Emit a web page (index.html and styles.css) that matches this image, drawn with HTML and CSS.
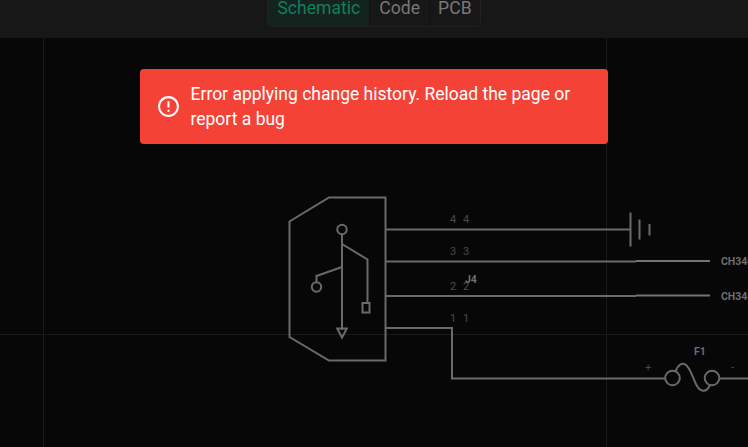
FILE: index.html
```html
<!DOCTYPE html>
<html lang="en">
<head>
<meta charset="utf-8">
<title>Schematic</title>
<link rel="stylesheet" href="styles.css">
</head>
<body>
<div class="app">
  <header class="topbar">
    <div class="tabs">
      <div class="tab tab-active">Schematic</div>
      <div class="tab">Code</div>
      <div class="tab tab-pcb">PCB</div>
    </div>
  </header>
  <main class="canvas">
    <svg class="schematic" width="748" height="409" viewBox="0 38 748 409" xmlns="http://www.w3.org/2000/svg">
      <g class="grid">
        <path d="M43.5 38V447M606.5 38V447M0 334.5H748"/>
      </g>
      <g class="wire">
        <path d="M329 197.500H385.500V360.500H329L289.500 337V221.500Z"/>
        <path d="M385.500 229.500H630M385.500 261.500H636M385.500 296H636M385.500 328H452V378.500H666"/>
        <path class="wire-bright" d="M636 261H710M636 295.500H710"/>
        <circle cx="342" cy="229.500" r="4.700"/>
        <path d="M342 234V330M342 244L367.500 259.500V302"/>
        <rect x="362.500" y="303" width="7" height="9.500"/>
        <path d="M337.200 328.500H346.800L342 337.500Z"/>
        <path d="M342 267L316.500 276V282"/>
        <circle cx="316.500" cy="287" r="4.700"/>
        <path class="bar" d="M630.500 212.500V246.500M639.500 219.500V239.500M649.500 224V235.500"/>
        <circle cx="672.500" cy="378" r="7.300"/>
        <circle cx="712" cy="378" r="7.300"/>
        <path d="M719.500 378.500H748"/>
        <path d="M675.500 371C678 365 682 362 686 365C691 369 693 379 697 386C700 391 706 394 710 385"/>
      </g>
      <g class="pins">
        <text x="450" y="223">4</text><text x="463" y="223">4</text>
        <text x="450" y="255">3</text><text x="463" y="255">3</text>
        <text x="450" y="290">2</text><text x="463" y="290">2</text>
        <text x="450" y="322">1</text><text x="463" y="322">1</text>
        <text x="645" y="371">+</text><text x="731" y="371">-</text>
      </g>
      <g class="labels">
        <text x="465" y="283">J4</text>
        <text x="721" y="265">CH340</text>
        <text x="721" y="300">CH340</text>
        <text x="694" y="355">F1</text>
      </g>
    </svg>
    <div class="alert" role="alert">
      <svg class="alert-icon" viewBox="0 0 24 24" width="25" height="25" xmlns="http://www.w3.org/2000/svg">
        <path d="M11 15h2v2h-2zm0-8h2v6h-2zm.99-5C6.470 2 2 6.480 2 12s4.470 10 9.990 10C17.520 22 22 17.520 22 12S17.520 2 11.990 2zM12 20c-4.420 0-8-3.580-8-8s3.580-8 8-8 8 3.580 8 8-3.580 8-8 8z"/>
      </svg>
      <div class="alert-message">Error applying change history. Reload the page or report a bug</div>
    </div>
  </main>
</div>
</body>
</html>
```
FILE: styles.css
```css
* {
  box-sizing: border-box;
}

html,
body {
  margin: 0;
  height: 100%;
  overflow: hidden;
  background: #070707;
}

.app {
  display: flex;
  flex-direction: column;
  height: 447px;
  font-family: Roboto, "Liberation Sans", sans-serif;
}

.topbar {
  flex: 0 0 38px;
  display: flex;
  justify-content: center;
  align-items: flex-end;
  background: #171717;
  padding-bottom: 11px;
}

.tabs {
  display: flex;
  height: 27px;
  border: 1px solid #202020;
  border-top: 0;
  border-radius: 0 0 5px 5px;
  overflow: hidden;
}

.tab {
  display: flex;
  align-items: flex-end;
  padding: 0 9px 7px;
  font-size: 17.600px;
  line-height: 22px;
  color: #787878;
  border-left: 1px solid #111;
  opacity: 0.999;
}

.tab:first-child {
  border-left: 0;
}

.tab-pcb {
  padding: 0 8px 7px;
}

.tab-active {
  color: #0f7f5c;
  background: #15231e;
}

.canvas {
  position: relative;
  flex: 1;
  background: #070707;
}

.schematic {
  position: absolute;
  inset: 0;
  display: block;
  opacity: 0.999;
}

.grid path {
  fill: none;
  stroke: #1a1a1a;
  stroke-width: 1;
}

.wire {
  fill: none;
  stroke: #6a6a6a;
  stroke-width: 2;
}

.wire-bright {
  stroke: #747474;
}

.pins text {
  font-family: Roboto, sans-serif;
  font-size: 11px;
  fill: #4a4a4a;
}

.labels text {
  font-family: Roboto, sans-serif;
  font-size: 10.500px;
  font-weight: 700;
  fill: #6e6e6e;
}

.alert {
  position: absolute;
  left: 140px;
  top: 31px;
  width: 468px;
  height: 75px;
  display: flex;
  align-items: center;
  gap: 10px;
  padding: 0 15px 0 15.500px;
  background: #f44336;
  border-radius: 4px;
  color: #fff;
}

.alert-icon {
  flex: none;
  fill: #fff;
}

.alert-message {
  padding-top: 1px;
  font-size: 17.500px;
  font-weight: 400;
  line-height: 25px;
}
```
